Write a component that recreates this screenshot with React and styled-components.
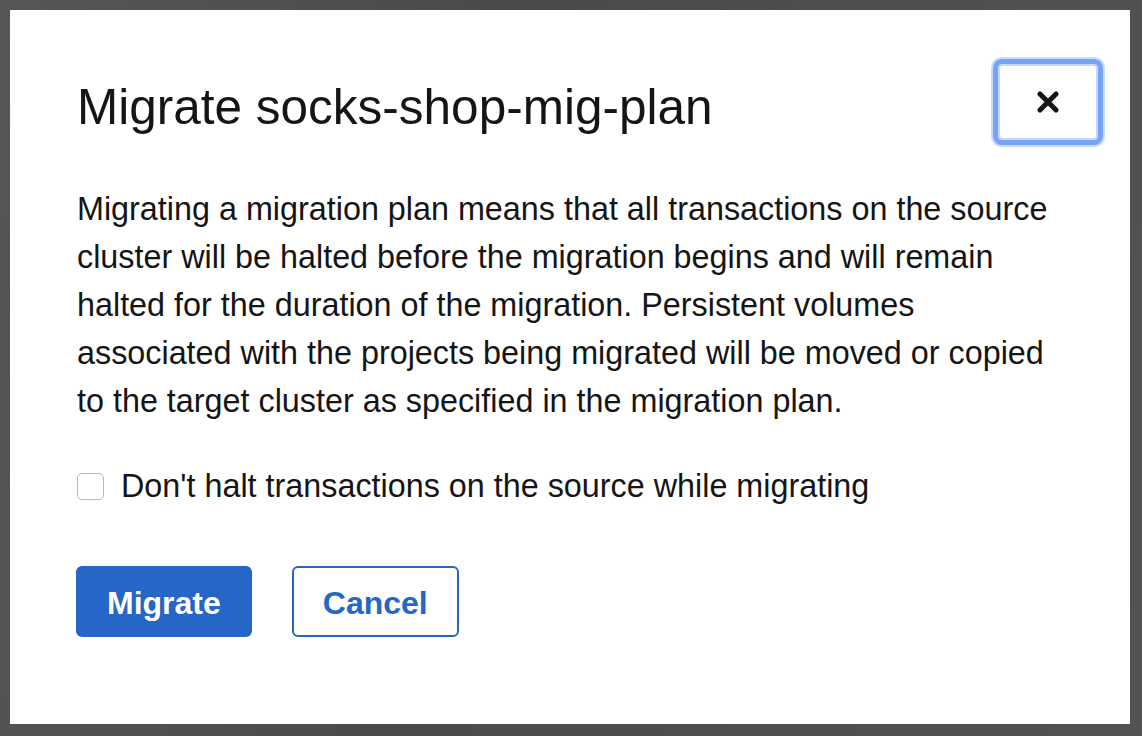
import React from 'react';
import styled, { createGlobalStyle } from 'styled-components';

const GlobalStyle = createGlobalStyle`
  body {
    margin: 0;
    background: #4f4f4f;
    font-family: "Liberation Sans", Arial, sans-serif;
    color: #151515;
  }
`;

const Backdrop = styled.div`
  width: 1142px;
  height: 736px;
  padding: 10px 12px 12px 10px;
  box-sizing: border-box;
  background: linear-gradient(100deg, #565656 0%, #4a4a4a 40%, #525252 100%);
`;

const Modal = styled.div`
  width: 1120px;
  height: 714px;
  box-sizing: border-box;
  padding: 54px 32px 87px 67px;
  background: #fff;
  display: flex;
  flex-direction: column;
`;

const Header = styled.div`
  display: flex;
  justify-content: space-between;
  align-items: flex-start;
`;

const Title = styled.h1`
  margin: 15px 0 0;
  font-size: 49.5px;
  line-height: 56px;
  font-weight: 400;
`;

const CloseButton = styled.button`
  width: 100px;
  height: 76px;
  box-sizing: border-box;
  border: 2px solid #c3d8fb;
  border-radius: 4px;
  background: #fff;
  box-shadow: 0 0 0 5px #76a3f3, 0 0 0 7px #c8dcfc;
  display: flex;
  align-items: center;
  justify-content: center;
  padding: 0;
  cursor: pointer;
`;

const Body = styled.p`
  margin: 45px 0 0;
  font-size: 32.35px;
  line-height: 48px;
`;

const CheckRow = styled.label`
  margin-top: 37px;
  display: flex;
  align-items: center;
  gap: 17px;
  font-size: 32.35px;
  line-height: 48px;
`;

const Box = styled.input`
  appearance: none;
  margin: 0;
  width: 27px;
  height: 27px;
  border: 1px solid #b9b9b9;
  border-radius: 5px;
  background: #fff;
`;

const Footer = styled.div`
  margin: 56px 0 0 -1px;
  display: flex;
  gap: 40px;
`;

const Button = styled.button`
  height: 71px;
  padding: 3px 29px 0;
  border: 2px solid #2566c6;
  border-radius: 6px;
  font-family: "Liberation Sans", Arial, sans-serif;
  font-size: 32px;
  font-weight: 700;
  background: ${p => (p.$primary ? '#2566c6' : '#fff')};
  color: ${p => (p.$primary ? '#fff' : '#2566c6')};
  cursor: pointer;
`;

const App = () => {
    return (
        <Backdrop>
            <GlobalStyle />
            <Modal>
                <Header>
                    <Title>Migrate socks-shop-mig-plan</Title>
                    <CloseButton aria-label="Close">
                        <svg width="22" height="22" viewBox="0 0 22 22">
                            <path d="M3 3 L19 19 M19 3 L3 19" stroke="#151515" strokeWidth="5" strokeLinecap="round" />
                        </svg>
                    </CloseButton>
                </Header>
                <Body>
                    Migrating a migration plan means that all transactions on the source<br />
                    cluster will be halted before the migration begins and will remain<br />
                    halted for the duration of the migration. Persistent volumes<br />
                    associated with the projects being migrated will be moved or copied<br />
                    to the target cluster as specified in the migration plan.
                </Body>
                <CheckRow>
                    <Box type="checkbox" />
                    Don't halt transactions on the source while migrating
                </CheckRow>
                <Footer>
                    <Button $primary>Migrate</Button>
                    <Button>Cancel</Button>
                </Footer>
            </Modal>
        </Backdrop>
    );
};

export default App;
